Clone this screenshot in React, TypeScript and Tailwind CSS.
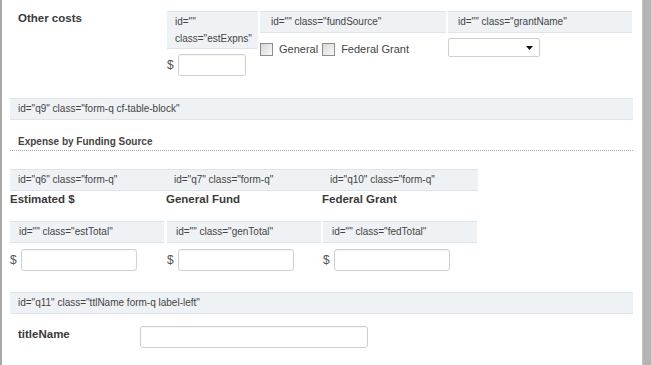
import React from 'react';

const hdr = 'bg-[#eef2f5] border-y border-[#dde6ee] text-[10px] text-[#444]';
const input = 'h-[22px] rounded-[3px] border border-[#cfcfcf] bg-white shadow-[inset_0_1px_1px_rgba(0,0,0,0.04)]';

function Checkbox() {
  return (
    <span className="inline-block h-[13px] w-[13px] shrink-0 border border-[#8c8c8c] bg-gradient-to-br from-[#d6d6d6] to-[#fafafa]" />
  );
}

function Money({ width }: { width: string }) {
  return (
    <div className="flex items-center">
      <span className="w-[11px] text-[12px] leading-none text-[#555]">$</span>
      <div className={`${input} ${width}`} />
    </div>
  );
}

function Column({ label, cls, first }: { label: string; cls: string; first?: boolean }) {
  return (
    <div className="w-[156px]">
      <div className="h-[16px] text-[11.5px] font-bold leading-[16px] text-[#3a3a3a]">{label}</div>
      <div className={`mt-[14px] h-[22px] w-[154px] leading-[20px] pl-[9px] ${first ? '' : 'ml-px'} ${hdr}`}>
        id=&quot;&quot; class=&quot;{cls}&quot;
      </div>
      <div className={`mt-[6px] ${first ? '' : 'ml-px'}`}>
        <Money width="w-[116px]" />
      </div>
    </div>
  );
}

export default function App() {
  return (
    <div className="flex h-[365px] w-[651px] overflow-hidden bg-white font-['Liberation_Sans',Arial,sans-serif] text-[#333]">
      <div className="w-[2px] shrink-0 bg-[#a9a9a9]" />
      <div className="flex-1 pl-2 pr-[9px]">
        {/* Other costs */}
        <div className="flex items-start pt-[11px]">
          <div className="w-[157px] pl-2 text-[11.5px] font-bold leading-[14px] text-[#3a3a3a]">Other costs</div>
          <div className="w-[91px]">
            <div className={`h-[38px] pl-2 pt-px leading-[17px] ${hdr}`}>
              id=&quot;&quot;
              <br />
              class=&quot;estExpns&quot;
            </div>
            <div className="mt-[5px]">
              <Money width="w-[68px]" />
            </div>
          </div>
          <div className="ml-[2px] w-[186px]">
            <div className={`h-[22px] pl-[11px] leading-[20px] ${hdr}`}>id=&quot;&quot; class=&quot;fundSource&quot;</div>
            <div className="mt-[8px] flex items-center text-[11px] text-[#444]">
              <Checkbox />
              <span className="ml-[6px] mr-[4px]">General</span>
              <Checkbox />
              <span className="ml-[6px]">Federal Grant</span>
            </div>
          </div>
          <div className="ml-[2px] w-[184px]">
            <div className={`h-[22px] pl-[10px] leading-[20px] ${hdr}`}>id=&quot;&quot; class=&quot;grantName&quot;</div>
            <div className="mt-[5px] flex h-[19px] w-[92px] items-center justify-end rounded-[2px] border border-[#cfcfcf] bg-white pr-[6px]">
              <svg width="7" height="4" viewBox="0 0 7 4">
                <path d="M0 0h7L3.5 4z" fill="#111" />
              </svg>
            </div>
          </div>
        </div>

        {/* q9 */}
        <div className={`mt-[22px] h-[22px] pl-2 leading-[20px] ${hdr}`}>id=&quot;q9&quot; class=&quot;form-q cf-table-block&quot;</div>
        <div className="mt-[16px] border-b border-dotted border-[#aaa] pb-[2px] pl-2 text-[10px] font-bold leading-[12px] text-[#444]">
          Expense by Funding Source
        </div>

        <div className={`mt-[18px] grid h-[22px] w-[468px] grid-cols-3 leading-[20px] ${hdr}`}>
          <div className="pl-2">id=&quot;q6&quot; class=&quot;form-q&quot;</div>
          <div className="pl-2">id=&quot;q7&quot; class=&quot;form-q&quot;</div>
          <div className="pl-2">id=&quot;q10&quot; class=&quot;form-q&quot;</div>
        </div>
        <div className="flex">
          <Column label="Estimated $" cls="estTotal" first />
          <Column label="General Fund" cls="genTotal" />
          <Column label="Federal Grant" cls="fedTotal" />
        </div>

        {/* q11 */}
        <div className={`mt-[21px] h-[22px] pl-2 leading-[20px] ${hdr}`}>id=&quot;q11&quot; class=&quot;ttlName form-q label-left&quot;</div>
        <div className="mt-[12px] flex items-start">
          <div className="w-[130px] pl-2 pt-px text-[11.5px] font-bold leading-[14px] text-[#3a3a3a]">titleName</div>
          <div className={`${input} w-[228px]`} />
        </div>
      </div>
      <div className="w-[9px] shrink-0 border-l border-[#c4c4c4] bg-[#b4b4b4]" />
    </div>
  );
}
